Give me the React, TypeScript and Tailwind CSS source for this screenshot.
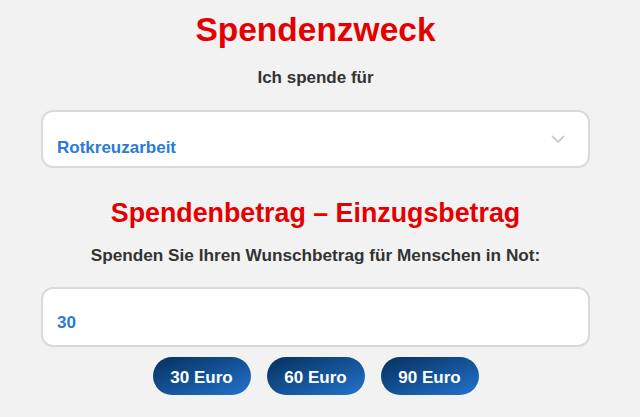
export default function App() {
  const font = { fontFamily: '"Liberation Sans", Arial, sans-serif' };
  return (
    <div className="min-h-[417px] bg-[#f2f2f2]" style={font}>
      <div className="ml-[41px] w-[549px] pt-[10px] flex flex-col">
        <h1 className="text-center text-[33.5px] leading-[40px] font-bold text-[#e40000]">Spendenzweck</h1>
        <p className="mt-[15px] text-center text-[17px] leading-[26px] font-bold text-[#333333]">Ich spende für</p>
        <div className="mt-[19px] h-[58px] rounded-[12px] border-2 border-[#dadada] bg-white flex justify-between pl-[14px] pr-[23px] pb-[5px]">
          <span className="self-end text-[17px] leading-[26px] font-bold text-[#2b7bd6]">Rotkreuzarbeit</span>
          <svg className="mt-[23px]" width="14" height="9" viewBox="0 0 14 9" fill="none">
            <path d="M1.5 1.5 L7 7 L12.5 1.5" stroke="#cccccc" strokeWidth="1.8" strokeLinecap="round" strokeLinejoin="round" />
          </svg>
        </div>
        <h2 className="mt-[29px] text-center text-[26.8px] leading-[32px] font-bold text-[#e40000]">Spendenbetrag – Einzugsbetrag</h2>
        <p className="mt-[13px] text-center text-[17.2px] leading-[26px] font-bold text-[#333333]">Spenden Sie Ihren Wunschbetrag für Menschen in Not:</p>
        <div className="mt-[19px] h-[60px] rounded-[12px] border-2 border-[#dadada] bg-white flex items-end pl-[14px] pb-[9px]">
          <span className="text-[17px] leading-[26px] font-bold text-[#2b7bd6]">30</span>
        </div>
        <div className="mt-[10px] flex justify-center gap-[16px]">
          {["30 Euro", "60 Euro", "90 Euro"].map((t) => (
            <button key={t} className="w-[98px] h-[38px] rounded-full bg-linear-to-br from-[#06315f] to-[#2374cf] text-white text-[17px] leading-[26px] font-bold flex items-center justify-center pt-[3px]">
              {t}
            </button>
          ))}
        </div>
      </div>
    </div>
  );
}
